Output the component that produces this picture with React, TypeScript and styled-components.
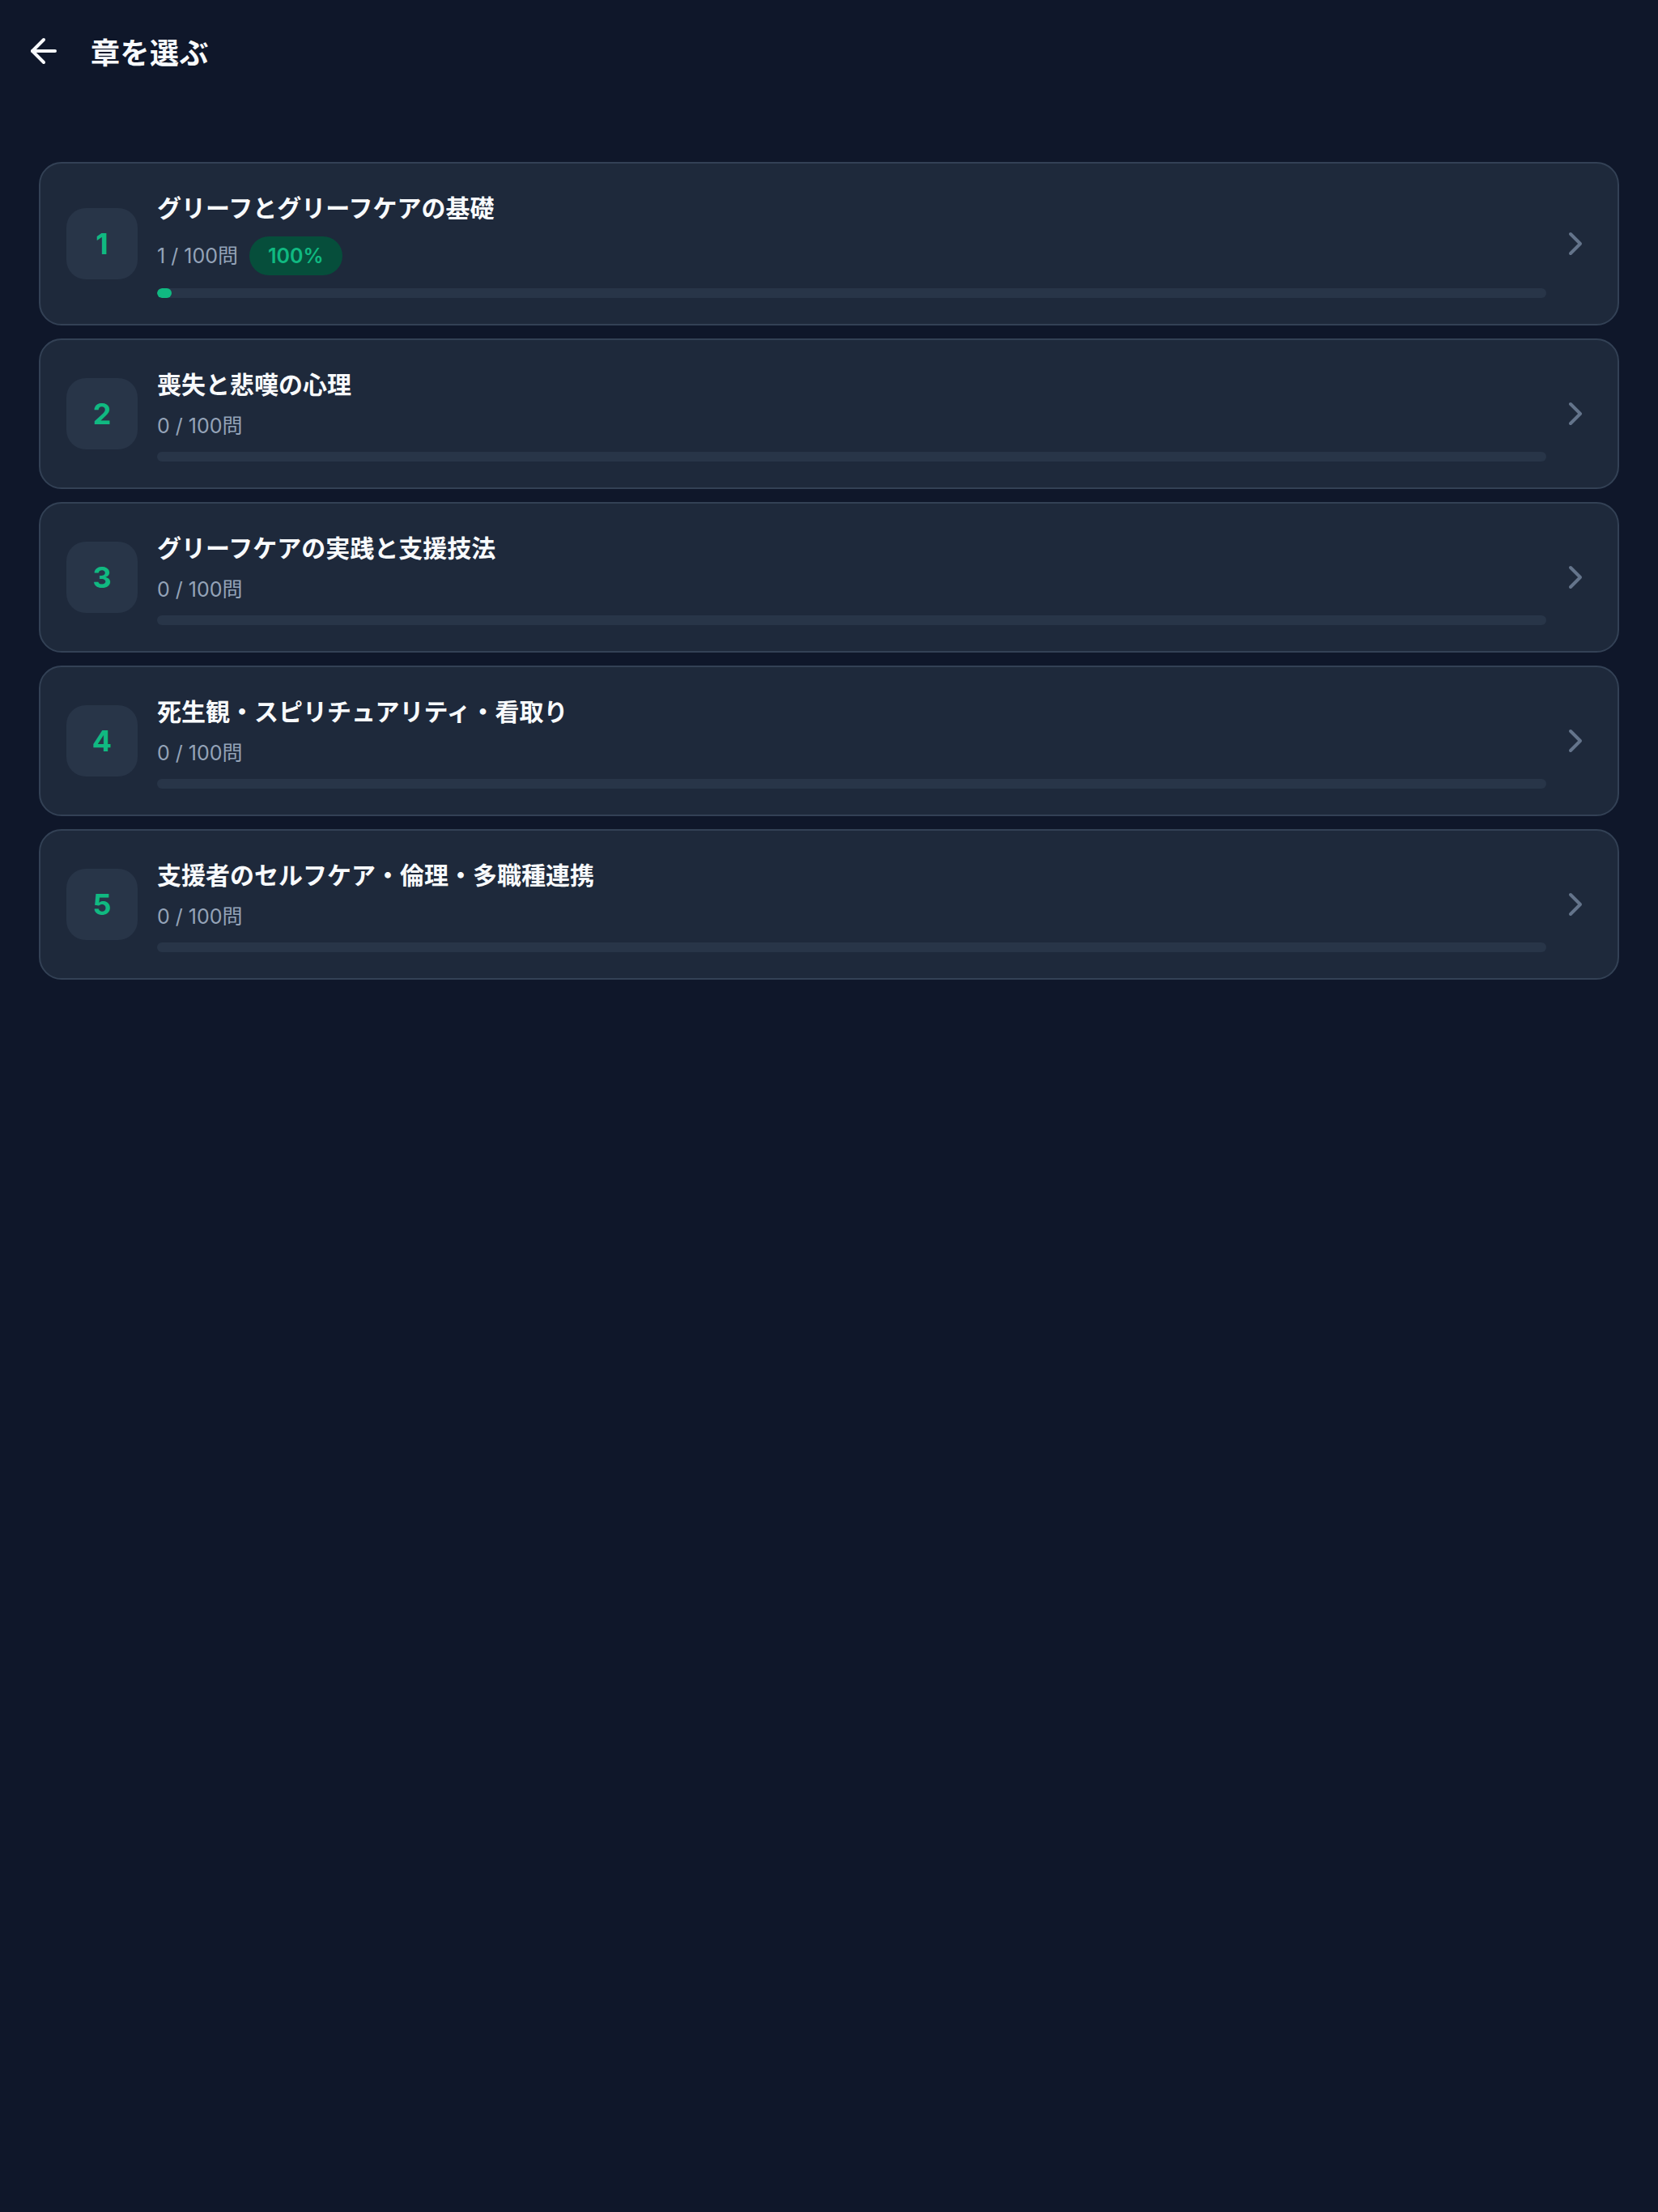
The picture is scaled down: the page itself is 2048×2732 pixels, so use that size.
import React from 'react';
import styled, { createGlobalStyle } from 'styled-components';
import { ArrowLeft, ChevronRight } from 'lucide-react';

interface Chapter {
  id: number;
  title: string;
  done: number;
  total: number;
}

const chapters: Chapter[] = [
  { id: 1, title: 'グリーフとグリーフケアの基礎', done: 1, total: 100 },
  { id: 2, title: '喪失と悲嘆の心理', done: 0, total: 100 },
  { id: 3, title: 'グリーフケアの実践と支援技法', done: 0, total: 100 },
  { id: 4, title: '死生観・スピリチュアリティ・看取り', done: 0, total: 100 },
  { id: 5, title: '支援者のセルフケア・倫理・多職種連携', done: 0, total: 100 },
];

// the first chapter shows its accuracy badge
const accuracy: Record<number, number> = { 1: 100 };

const GlobalStyle = createGlobalStyle`
  html, body {
    margin: 0;
    padding: 0;
    background: #0f172a;
  }
  body {
    font-family: Inter, "Noto Sans CJK JP", "Noto Sans", sans-serif;
    color: #f8fafc;
    min-height: 2732px;
  }
`;

const Page = styled.div`
  width: 2048px;
  min-height: 2732px;
  background: #0f172a;
`;

const Header = styled.header`
  height: 126px;
  display: flex;
  align-items: center;
  padding: 0 30px;
  gap: 34px;
  box-sizing: border-box;
`;

const BackButton = styled.button`
  width: 48px;
  height: 48px;
  padding: 0;
  border: none;
  background: transparent;
  color: #f8fafc;
  display: flex;
  align-items: center;
  justify-content: center;
  cursor: pointer;
`;

const PageTitle = styled.h1`
  margin: 0;
  font-size: 36px;
  font-weight: 700;
  color: #f8fafc;
  letter-spacing: 0.5px;
`;

const List = styled.main`
  display: flex;
  flex-direction: column;
  gap: 16px;
  padding: 74px 48px 0;
`;

const Card = styled.button`
  display: flex;
  align-items: center;
  width: 100%;
  padding: 32px 28px 32px 32px;
  background: #1e293b;
  border: 2px solid #334155;
  border-radius: 28px;
  text-align: left;
  font-family: inherit;
  color: inherit;
  cursor: pointer;
  box-sizing: border-box;
`;

const NumberBox = styled.div`
  flex: 0 0 88px;
  height: 88px;
  margin-right: 24px;
  border-radius: 24px;
  background: #283548;
  color: #10b981;
  font-size: 36px;
  font-weight: 700;
  display: flex;
  align-items: center;
  justify-content: center;
`;

const Body = styled.div`
  flex: 1;
  min-width: 0;
  display: flex;
  flex-direction: column;
`;

const ChapterTitle = styled.div`
  font-size: 30px;
  line-height: 46px;
  font-weight: 700;
  color: #f8fafc;
`;

const MetaRow = styled.div`
  display: flex;
  align-items: center;
  gap: 14px;
  margin-top: 8px;
  min-height: 40px;
`;

const Count = styled.span`
  font-size: 25px;
  line-height: 40px;
  color: #94a3b8;
`;

const Badge = styled.span`
  height: 48px;
  padding: 0 23px;
  margin: 4px 0 4px;
  border-radius: 24px;
  background: #064e3b;
  color: #10b981;
  font-size: 25px;
  font-weight: 600;
  display: flex;
  align-items: center;
`;

const Track = styled.div`
  height: 12px;
  margin-top: 12px;
  border-radius: 6px;
  background: #283548;
  overflow: hidden;
`;

const Fill = styled.div`
  height: 100%;
  min-width: 18px;
  border-radius: 6px;
  background: #10b981;
`;

const Chevron = styled.div`
  flex: 0 0 48px;
  margin-left: 12px;
  display: flex;
  color: #64748b;
`;

function ChapterCard({ chapter }: { chapter: Chapter }): JSX.Element {
  const rate = accuracy[chapter.id];
  const progress = (chapter.done / chapter.total) * 100;
  return (
    <Card type="button">
      <NumberBox>{chapter.id}</NumberBox>
      <Body>
        <ChapterTitle>{chapter.title}</ChapterTitle>
        <MetaRow>
          <Count>
            {chapter.done} / {chapter.total}問
          </Count>
          {rate !== undefined && <Badge>{rate}%</Badge>}
        </MetaRow>
        <Track>
          {chapter.done > 0 && <Fill style={{ width: `${progress}%` }} />}
        </Track>
      </Body>
      <Chevron>
        <ChevronRight size={48} strokeWidth={2} />
      </Chevron>
    </Card>
  );
}

export default function App(): JSX.Element {
  return (
    <Page>
      <GlobalStyle />
      <Header>
        <BackButton type="button" aria-label="戻る">
          <ArrowLeft size={48} strokeWidth={2} />
        </BackButton>
        <PageTitle>章を選ぶ</PageTitle>
      </Header>
      <List>
        {chapters.map((c) => (
          <ChapterCard key={c.id} chapter={c} />
        ))}
      </List>
    </Page>
  );
}
